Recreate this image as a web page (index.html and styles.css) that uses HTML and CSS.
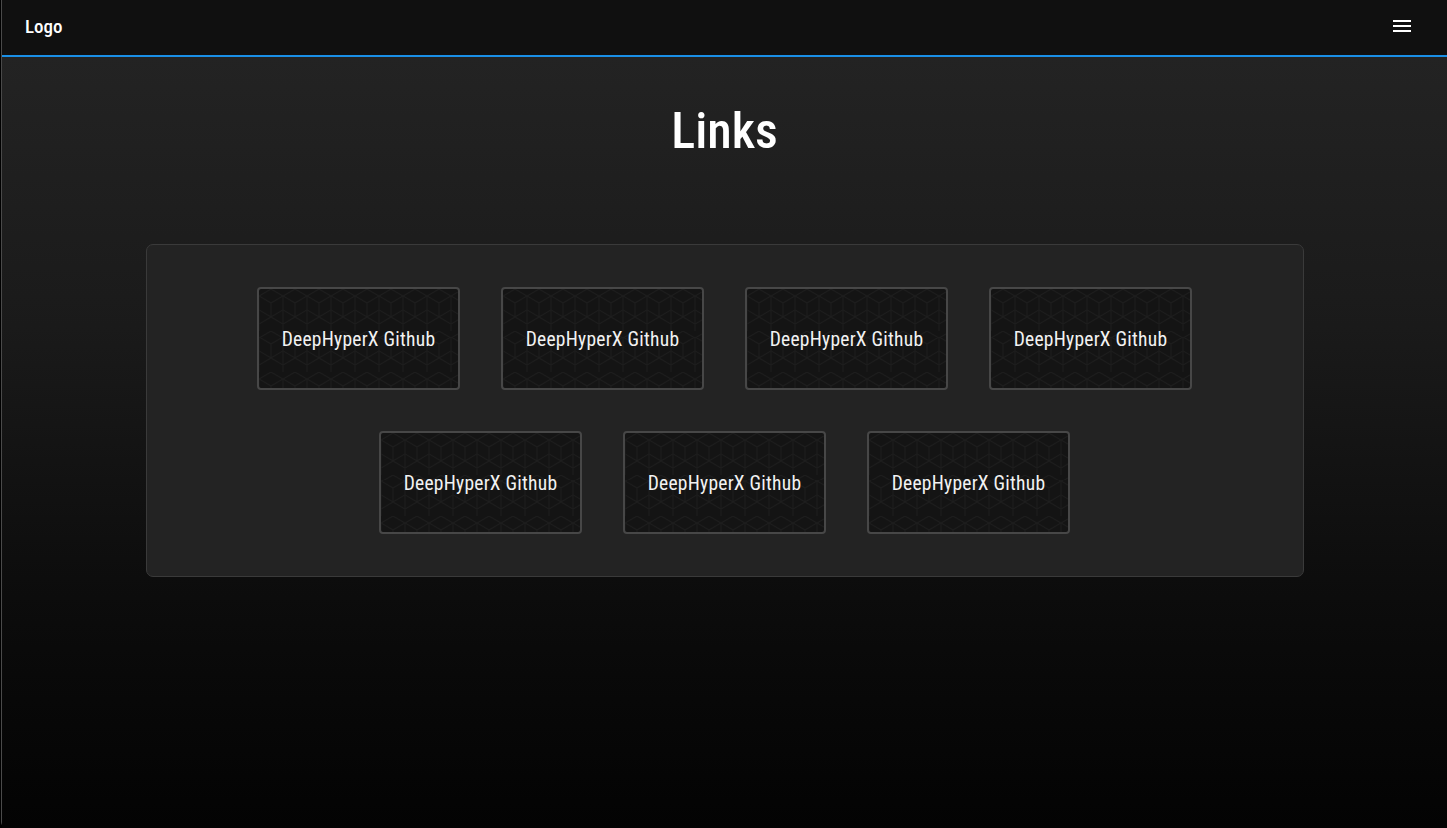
FILE: index.html
```html
<!DOCTYPE html>
<html lang="en">
<head>
<meta charset="utf-8">
<title>Links</title>
<link rel="stylesheet" href="styles.css">
</head>
<body>
<div class="app">
  <header class="topbar">
    <div class="logo">Logo</div>
    <button class="menu" aria-label="Menu">
      <svg width="18" height="12" viewBox="0 0 18 12"><rect x="0" y="0" width="18" height="2" fill="#fff"/><rect x="0" y="5" width="18" height="2" fill="#fff"/><rect x="0" y="10" width="18" height="2" fill="#fff"/></svg>
    </button>
  </header>
  <main class="main">
    <h1 class="title">Links</h1>
    <section class="panel">
      <a class="link-btn" href="#">DeepHyperX Github</a>
      <a class="link-btn" href="#">DeepHyperX Github</a>
      <a class="link-btn" href="#">DeepHyperX Github</a>
      <a class="link-btn" href="#">DeepHyperX Github</a>
      <a class="link-btn" href="#">DeepHyperX Github</a>
      <a class="link-btn" href="#">DeepHyperX Github</a>
      <a class="link-btn" href="#">DeepHyperX Github</a>
    </section>
  </main>
</div>
</body>
</html>
```

FILE: styles.css
```css
* { box-sizing: border-box; }
html, body { margin: 0; padding: 0; height: 100%; }
body {
  background: #000;
  font-family: "Roboto Condensed", Roboto, "Liberation Sans", sans-serif;
  font-stretch: condensed;
  color: #fff;
}
.app {
  min-height: 828px;
  border-left: 1px solid #4a4a4a;
  margin-left: 1px;
  border-bottom-left-radius: 6px;
  display: flex;
  flex-direction: column;
}
.topbar {
  height: 57px;
  background: #101010;
  border-bottom: 2px solid #1a8fe6;
  display: flex;
  align-items: center;
  justify-content: space-between;
  padding: 0 36px 0 23px;
}
.logo {
  font-size: 19px;
  font-weight: 500;
  margin-top: -2px;
}
.menu {
  background: none;
  border: 0;
  padding: 0;
  display: flex;
  margin-top: -3px;
}
.main {
  flex: 1;
  background: linear-gradient(180deg, #232323 0%, #1a1a1a 35%, #0c0c0c 70%, #030303 100%);
  display: flex;
  flex-direction: column;
  align-items: center;
  padding-top: 48px;
}
.title {
  margin: 0;
  font-size: 50px;
  font-weight: 500;
  line-height: 52px;
}
.panel {
  margin-top: 87px;
  width: 1158px;
  background: #232323;
  border: 1px solid #3a3a3a;
  border-radius: 7px;
  padding: 42px 40px;
  display: flex;
  flex-wrap: wrap;
  justify-content: center;
  gap: 41px 41px;
}
.link-btn {
  width: 203px;
  height: 103px;
  padding-top: 2px;
  display: flex;
  align-items: center;
  justify-content: center;
  color: #f2f2f2;
  text-decoration: none;
  font-size: 19.5px;
  letter-spacing: 0.25px;
  border: 2px solid #474747;
  border-radius: 4px;
  background-color: #141414;
  background-image: url("data:image/svg+xml;utf8,<svg xmlns='http://www.w3.org/2000/svg' width='24' height='41.57' viewBox='0 0 24 41.57'><g fill='none' stroke='%231d1d1d' stroke-width='1'><path d='M12 0 L24 6.93 L24 20.78 L12 27.71 L0 20.78 L0 6.93 Z'/><path d='M12 13.86 L0 6.93 M12 13.86 L24 6.93 M12 13.86 L12 27.71'/><path d='M0 34.64 L12 27.71 M24 34.64 L12 27.71 M0 20.78 L0 41.57 M24 20.78 L24 41.57 M0 34.64 L0 41.57'/></g></svg>");
}
```
